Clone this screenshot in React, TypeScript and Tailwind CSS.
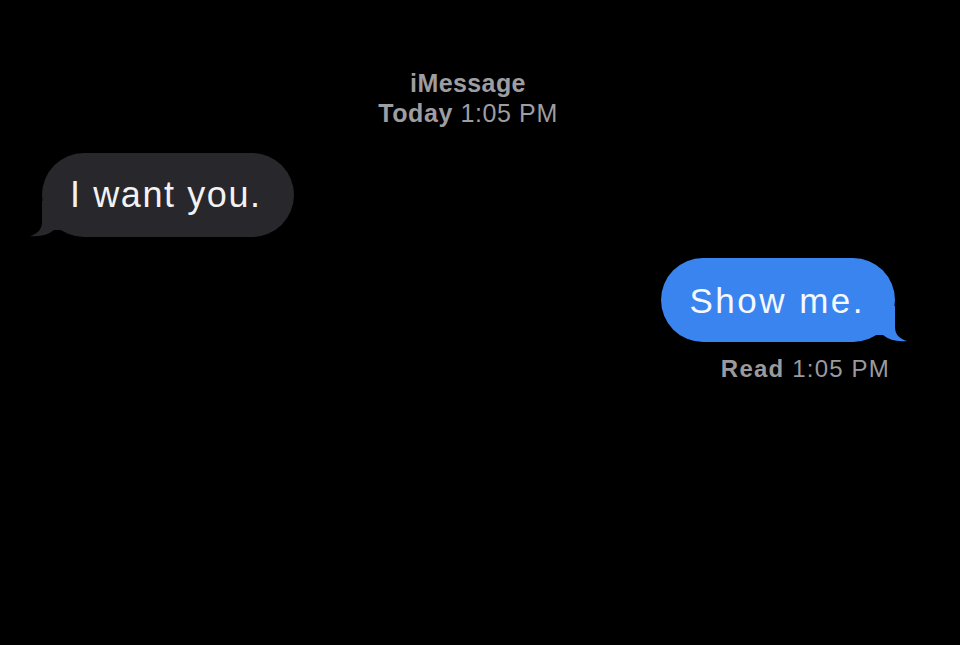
const font = { fontFamily: '"Liberation Sans", Arial, sans-serif' };

function TailLeft({ color }: { color: string }) {
  return (
    <svg className="absolute bottom-0 left-[-12px]" width="38" height="36" viewBox="0 0 38 36">
      <path d="M12 0 L12 21 C12 29 7 33 0 35 C10 36 18 34 24 29 L38 29 L38 0 Z" fill={color} />
    </svg>
  );
}

function TailRight({ color }: { color: string }) {
  return (
    <svg className="absolute bottom-0 right-[-12px]" width="38" height="36" viewBox="0 0 38 36">
      <path d="M26 0 L26 21 C26 29 31 33 38 35 C28 36 20 34 14 29 L0 29 L0 0 Z" fill={color} />
    </svg>
  );
}

export default function App() {
  return (
    <div className="w-[960px] h-[645px] bg-black overflow-hidden flex flex-col" style={font}>
      <div className="pt-[68px] pr-[24px] flex flex-col items-center text-[25px] leading-[30px] text-[#9d9da2]">
        <div className="font-semibold tracking-[0.4px]">iMessage</div>
        <div className="tracking-[0.6px]">
          <span className="font-semibold">Today</span> 1:05 PM
        </div>
      </div>

      <div className="mt-[25px] ml-[42px] self-start relative">
        <TailLeft color="#28272c" />
        <div className="relative h-[84px] rounded-[42px] bg-[#28272c] pl-[28px] pr-[32px] flex items-center text-[36px] leading-none tracking-[1.6px] text-[#f2f2f2]">
          I want you.
        </div>
      </div>

      <div className="mt-[21px] mr-[65px] self-end relative">
        <TailRight color="#3a84f0" />
        <div className="relative h-[84px] rounded-[42px] bg-[#3a84f0] pl-[28px] pr-[30px] flex items-center text-[35px] leading-none tracking-[2.5px] text-[#f4f8ff]">
          Show me.
        </div>
      </div>

      <div className="mt-[12px] mr-[70px] self-end text-[24px] leading-[29px] tracking-[1.2px] text-[#9a9a9e]">
        <span className="font-bold">Read</span> 1:05 PM
      </div>
    </div>
  );
}
